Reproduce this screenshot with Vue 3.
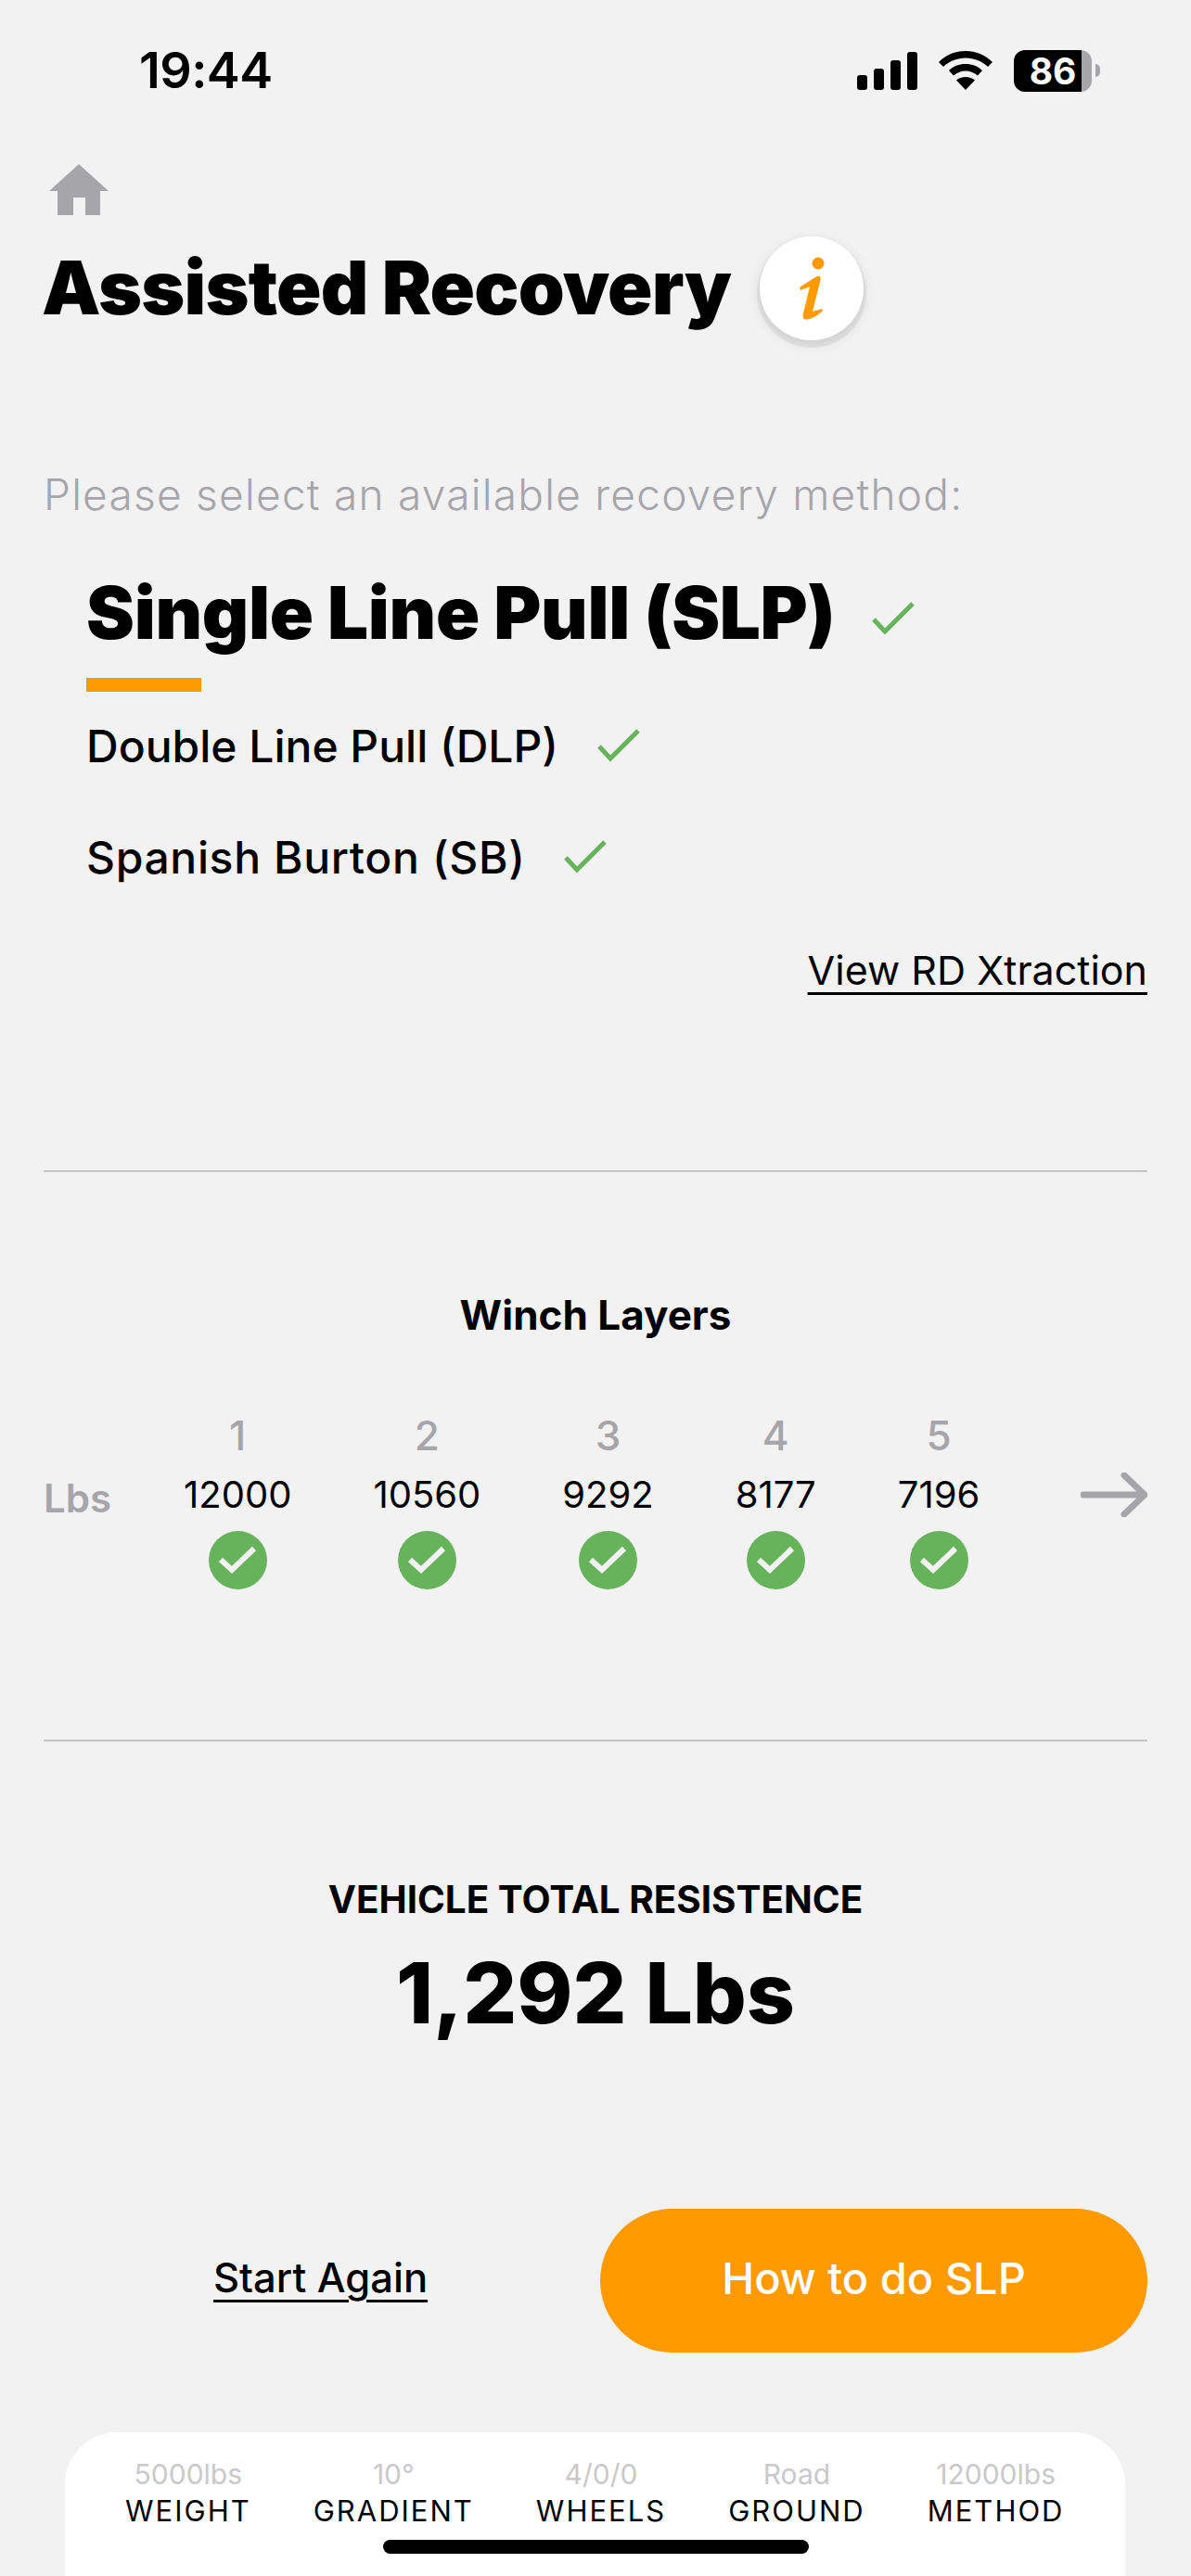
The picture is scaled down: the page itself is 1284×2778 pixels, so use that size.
<template>
  <div class="screen">
    <div class="status">
      <span class="status__time">19:44</span>
      <div class="status__icons">
        <svg width="65" height="41" viewBox="0 0 65 41">
          <rect x="0" y="25" width="11" height="16" rx="3" />
          <rect x="18" y="18" width="11" height="23" rx="3" />
          <rect x="36" y="9" width="11" height="32" rx="3" />
          <rect x="54" y="0" width="11" height="41" rx="3" />
        </svg>
        <svg width="58" height="42" viewBox="0 0 58 42">
          <path d="M29 0C18 0 8 4 0 12l5 5c6.500-6 15-9.500 24-9.500S46.500 11 53 17l5-5C50 4 40 0 29 0z" />
          <path d="M29 14c-7 0-13.500 2.500-18 7l5 5.500c3.500-3 8-5 13-5s9.500 2 13 5l5-5.500c-4.500-4.500-11-7-18-7z" />
          <path d="M29 28c-4 0-7.500 1.500-10 3.500L29 42l10-10.500C36.500 29.500 33 28 29 28z" />
        </svg>
        <div class="battery">
          <div class="battery__body">
            <span class="battery__level">86</span>
          </div>
          <span class="battery__cap"></span>
        </div>
      </div>
    </div>

    <main class="content">
      <svg class="home" width="64" height="55" viewBox="0 0 64 55">
        <path d="M32 0 L64 29 H55 V55 H39 V36 H26 V55 H9 V29 H0 Z" />
      </svg>

      <div class="title-row">
        <h1 class="title">Assisted Recovery</h1>
        <span class="info">
          <svg width="112" height="112" viewBox="0 0 112 112">
            <circle cx="63" cy="29" r="6.500" />
            <path d="M43 55 C49 51 56 46 62 43 C65 42 66 44 65.500 47 L57 81 L67 78 L68 80 C63 85 56 89 51 89.500 C47 90 46 87 47 83 L54 54 C51 55 47 57 44 58 Z" />
          </svg>
        </span>
      </div>

      <p class="prompt">Please select an available recovery method:</p>

      <ul class="methods">
        <li v-for="m in methods" :key="m.key" :class="['method', 'method--' + m.key, { 'is-active': m.active }]">
          <span class="method__label">{{ m.label }}</span>
          <svg class="method__check" width="46" height="36" viewBox="0 0 46 36">
            <path d="M2 19 L14 32 L44 2" />
          </svg>
        </li>
      </ul>

      <div class="xtraction"><a class="link">View RD Xtraction</a></div>

      <hr class="rule rule--top" />

      <h2 class="layers-title">Winch Layers</h2>
      <div class="layers">
        <span class="layers__unit">Lbs</span>
        <div v-for="l in layers" :key="l.n" class="layer">
          <span class="layer__num">{{ l.n }}</span>
          <span class="layer__value">{{ l.value }}</span>
          <svg class="layer__ok" width="63" height="63" viewBox="0 0 63 63">
            <circle cx="31.500" cy="31.500" r="31.500" />
            <path d="M13 31 L25 42 L49 19" />
          </svg>
        </div>
        <svg class="layers__arrow" width="72" height="48" viewBox="0 0 72 48">
          <path d="M3 24 H68 M47 3 L69 24 L47 45" />
        </svg>
      </div>

      <hr class="rule rule--bottom" />

      <div class="total">
        <div class="total__label">VEHICLE TOTAL RESISTENCE</div>
        <div class="total__value">1,292 Lbs</div>
      </div>

      <div class="actions">
        <a class="link link--again">Start Again</a>
        <button class="cta">How to do SLP</button>
      </div>
    </main>

    <div class="summary">
      <div v-for="s in summary" :key="s.label" class="summary__item">
        <span class="summary__value">{{ s.value }}</span>
        <span class="summary__label">{{ s.label }}</span>
      </div>
    </div>

    <div class="home-bar"></div>
  </div>
</template>

<script setup>
const methods = [
  { key: 'slp', label: 'Single Line Pull (SLP)', active: true },
  { key: 'dlp', label: 'Double Line Pull (DLP)' },
  { key: 'sb', label: 'Spanish Burton (SB)' }
]

const layers = [
  { n: 1, value: 12000 },
  { n: 2, value: 10560 },
  { n: 3, value: 9292 },
  { n: 4, value: 8177 },
  { n: 5, value: 7196 }
]

const summary = [
  { value: '5000lbs', label: 'WEIGHT' },
  { value: '10°', label: 'GRADIENT' },
  { value: '4/0/0', label: 'WHEELS' },
  { value: 'Road', label: 'GROUND' },
  { value: '12000lbs', label: 'METHOD' }
]
</script>

<style>
html, body {
  margin: 0;
  background: #f2f2f2;
}
</style>

<style scoped>
.screen {
  position: relative;
  width: 1284px;
  height: 2778px;
  overflow: hidden;
  background: #f2f2f2;
  color: #000;
  font-family: Inter, "Noto Sans", sans-serif;
}

.status {
  display: flex;
  align-items: center;
  justify-content: space-between;
  height: 42px;
  padding: 55px 98px 0 150px;
}

.status__time {
  font-size: 54px;
  font-weight: 600;
  letter-spacing: -0.6px;
  line-height: 42px;
}

.status__icons {
  display: flex;
  align-items: center;
  gap: 23px;
}

.battery {
  display: flex;
  align-items: center;
  gap: 4px;
}

.battery__body {
  width: 84px;
  height: 45px;
  border-radius: 12px;
  background: linear-gradient(to right, #000 87%, #a5a5aa 87%);
  display: flex;
  align-items: center;
  justify-content: center;
}

.battery__level {
  color: #fff;
  font-size: 39px;
  font-weight: 700;
}

.battery__cap {
  width: 5px;
  height: 14px;
  border-radius: 0 7px 7px 0;
  background: #a5a5aa;
}

.content {
  padding: 80px 47px 0;
}

.home {
  display: block;
  margin-left: 6px;
  fill: #a5a5aa;
}

.title-row {
  display: flex;
  align-items: center;
  gap: 31px;
  margin-top: 23px;
}

.title {
  margin: 0 0 2px -2px;
  font-size: 80px;
  font-weight: 900;
  letter-spacing: -0.8px;
  line-height: 110px;
}

.info {
  display: block;
  width: 112px;
  height: 112px;
  border-radius: 50%;
  background: #fff;
  box-shadow: 0 5px 0 3px rgba(0, 0, 0, 0.05), 0 4px 14px rgba(0, 0, 0, 0.12);
}

.info svg {
  display: block;
  fill: #ff9b00;
}

.prompt {
  margin: 136px 0 0;
  color: #a5a5aa;
  font-size: 46px;
  font-weight: 300;
  letter-spacing: 1.25px;
  line-height: 60px;
}

.methods {
  list-style: none;
  margin: 43px 0 0;
  padding: 0 0 0 46px;
}

.method {
  display: flex;
  align-items: center;
  gap: 42px;
  height: 120px;
  font-size: 48px;
  font-weight: 500;
}

.method--sb {
  letter-spacing: 0.65px;
}

.method.is-active {
  position: relative;
  height: 138px;
  gap: 40px;
  font-size: 78px;
  font-weight: 900;
  letter-spacing: -0.3px;
  align-items: flex-start;
}

.method.is-active .method__label {
  line-height: 110px;
}

.method.is-active .method__check {
  margin-top: 43px;
}

.method.is-active::after {
  content: '';
  position: absolute;
  left: 0;
  bottom: -2px;
  width: 124px;
  height: 15px;
  background: #ff9b00;
}

.method__check {
  fill: none;
  stroke: #66b35c;
  stroke-width: 5;
}

.xtraction {
  display: flex;
  justify-content: flex-end;
  margin-top: 36px;
}

.link {
  color: #000;
  font-size: 43px;
  text-decoration: underline;
  text-decoration-thickness: 3px;
  text-underline-offset: 8px;
}

.rule {
  border: 0;
  height: 2px;
  margin: 0;
  background: #c4c4c6;
}

.rule--top {
  margin-top: 190px;
}

.rule--bottom {
  margin-top: 162px;
}

.layers-title {
  margin: 124px 0 0;
  font-size: 44px;
  font-weight: 700;
  line-height: 60px;
  text-align: center;
}

.layers {
  position: relative;
  display: flex;
  align-items: flex-start;
  gap: 88px;
  margin-top: 72px;
}

.layers__unit {
  margin: 66px -10px 0 0;
  color: #a5a5aa;
  font-size: 42px;
  font-weight: 600;
  line-height: 60px;
}

.layer {
  display: flex;
  flex-direction: column;
  align-items: center;
}

.layer__num {
  color: #a5a5aa;
  font-size: 44px;
  font-weight: 500;
  line-height: 56px;
}

.layer__value {
  margin-top: 8px;
  font-size: 40px;
  line-height: 56px;
}

.layer__ok {
  margin-top: 11px;
}

.layer__ok circle {
  fill: #66b35c;
}

.layer__ok path {
  fill: none;
  stroke: #f2f2f2;
  stroke-width: 6;
}

.layers__arrow {
  position: absolute;
  right: 0;
  top: 68px;
  fill: none;
  stroke: #a5a5aa;
  stroke-width: 7;
  stroke-linecap: round;
  stroke-linejoin: round;
}

.total {
  margin-top: 141px;
  text-align: center;
}

.total__label {
  font-size: 40.400px;
  font-weight: 700;
  line-height: 60px;
}

.total__value {
  margin-top: 5px;
  font-size: 91px;
  font-weight: 800;
  line-height: 130px;
}

.actions {
  display: flex;
  align-items: center;
  justify-content: space-between;
  margin-top: 168px;
  padding-left: 183px;
}

.link--again {
  margin-bottom: 8px;
  font-size: 43.500px;
  font-weight: 500;
}

.cta {
  width: 590px;
  height: 155px;
  padding: 0 0 6px;
  border: 0;
  border-radius: 78px;
  background: #ff9b00;
  color: #fff;
  font-family: inherit;
  font-size: 47px;
  font-weight: 500;
}

.summary {
  position: absolute;
  left: 70px;
  right: 71px;
  top: 2623px;
  bottom: 0;
  display: flex;
  gap: 67px;
  box-sizing: border-box;
  padding: 25px 0 0 65px;
  border-radius: 56px 56px 0 0;
  background: #fff;
}

.summary__item {
  display: flex;
  flex-direction: column;
  align-items: center;
}

.summary__value {
  color: #c9c9cb;
  font-size: 30px;
  line-height: 40px;
}

.summary__label {
  font-size: 31px;
  letter-spacing: 2px;
  line-height: 40px;
}

.home-bar {
  position: absolute;
  left: 413px;
  top: 2739px;
  width: 459px;
  height: 15px;
  border-radius: 8px;
  background: #000;
}
</style>
